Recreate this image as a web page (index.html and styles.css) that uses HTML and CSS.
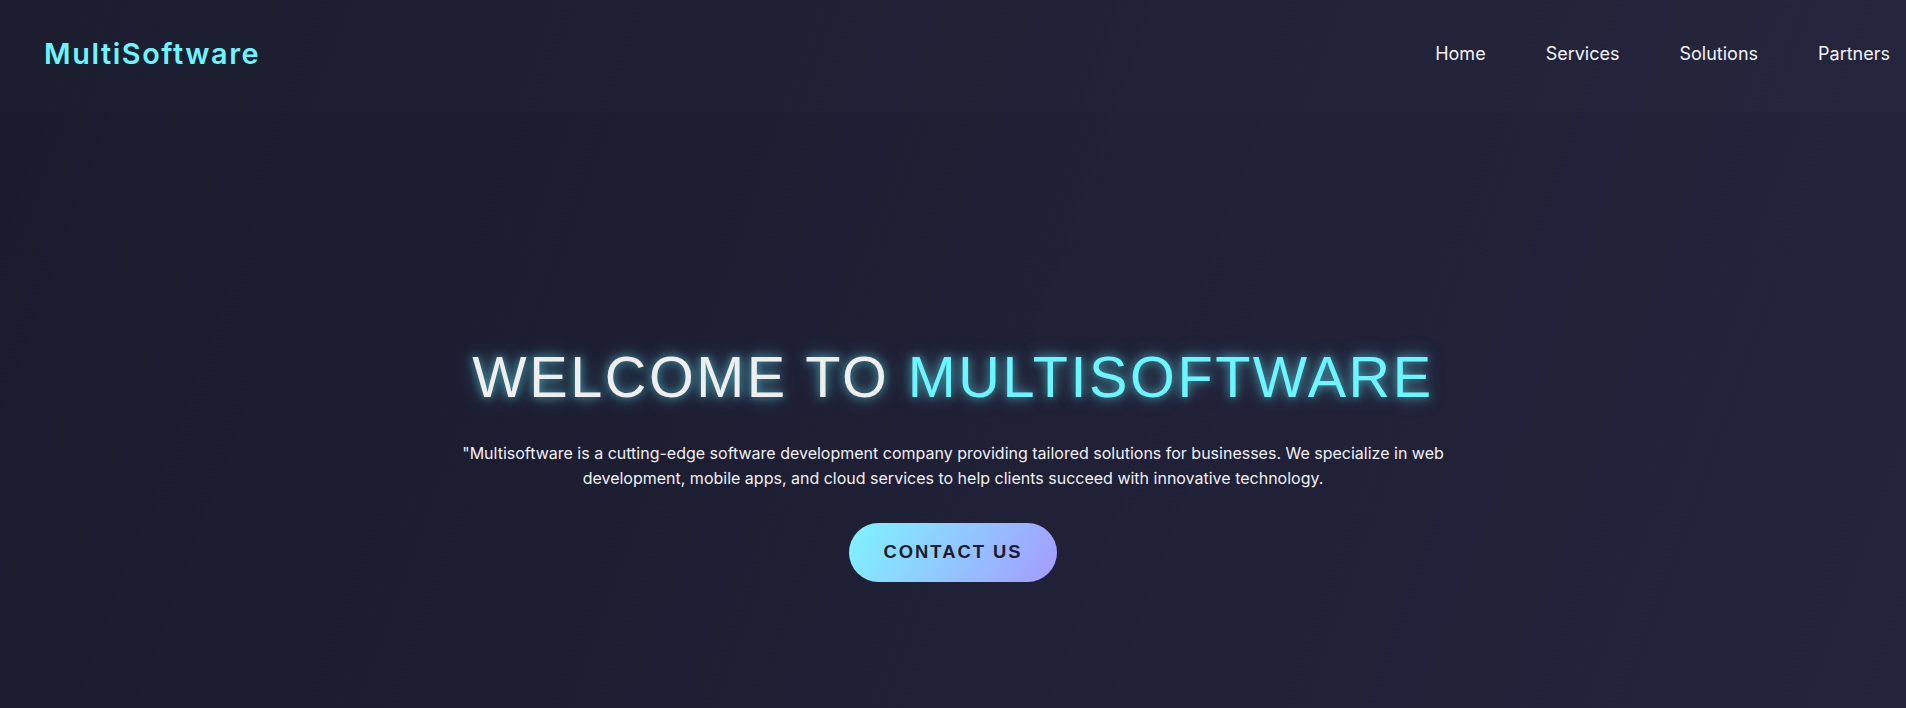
FILE: index.html
```html
<!DOCTYPE html>
<html lang="en">
<head>
<meta charset="utf-8">
<title>MultiSoftware</title>
<link rel="stylesheet" href="styles.css">
</head>
<body>
<header class="site-header">
  <div class="logo">MultiSoftware</div>
  <nav class="nav">
    <a href="#" class="nav-link">Home</a>
    <a href="#" class="nav-link">Services</a>
    <a href="#" class="nav-link">Solutions</a>
    <a href="#" class="nav-link">Partners</a>
  </nav>
</header>
<main class="hero">
  <h1 class="hero-title">WELCOME TO <span class="accent">MULTISOFTWARE</span></h1>
  <p class="hero-text">"Multisoftware is a cutting-edge software development company providing tailored solutions for businesses. We specialize in web development, mobile apps, and cloud services to help clients succeed with innovative technology.</p>
  <button class="cta">CONTACT US</button>
</main>
</body>
</html>
```
FILE: styles.css
```css
* { box-sizing: border-box; }
html, body { margin: 0; padding: 0; }
body {
  font-family: Inter, "Noto Sans", sans-serif;
  color: #f0f0f5;
  background: linear-gradient(110deg, #1b1b2e 0%, #202036 55%, #24243d 100%);
  overflow: hidden;
}
.site-header {
  display: flex;
  justify-content: space-between;
  align-items: center;
  padding: 36px 16px 41px 44px;
  background: rgba(255, 255, 255, 0.012);
}
.logo {
  font-size: 28.8px;
  font-weight: 600;
  letter-spacing: 1.6px;
  line-height: 35px;
  color: #6cf5ff;
}
.nav {
  display: flex;
  gap: 60px;
}
.nav-link {
  color: #f2f2f8;
  text-decoration: none;
  font-size: 18px;
  line-height: 35px;
}
.hero {
  height: 708px;
  padding-bottom: 6px;
  display: flex;
  flex-direction: column;
  align-items: center;
  justify-content: center;
  text-align: center;
}
.hero-title {
  margin: 0;
  font-family: "Liberation Sans", Arial, sans-serif;
  font-weight: 400;
  font-size: 57.6px;
  letter-spacing: 2.55px;
  color: #eeeeee;
  text-shadow: 0 0 10px rgba(102, 240, 255, 0.6), 0 0 20px rgba(102, 240, 255, 0.4);
}
.accent {
  color: #6cf5ff;
}
.hero-text {
  margin: 31px 0 0;
  max-width: 1000px;
  font-size: 16px;
  line-height: 24.6px;
  color: #f0f0f5;
}
.cta {
  margin-top: 32px;
  width: 208px;
  height: 59px;
  border: none;
  border-radius: 30px;
  background: linear-gradient(120deg, #7ff4ff 0%, #93c3ff 55%, #a59aff 100%);
  color: #1c1c30;
  font-family: "Liberation Sans", Arial, sans-serif;
  font-weight: 700;
  font-size: 18.4px;
  letter-spacing: 2px;
  cursor: pointer;
}
```
